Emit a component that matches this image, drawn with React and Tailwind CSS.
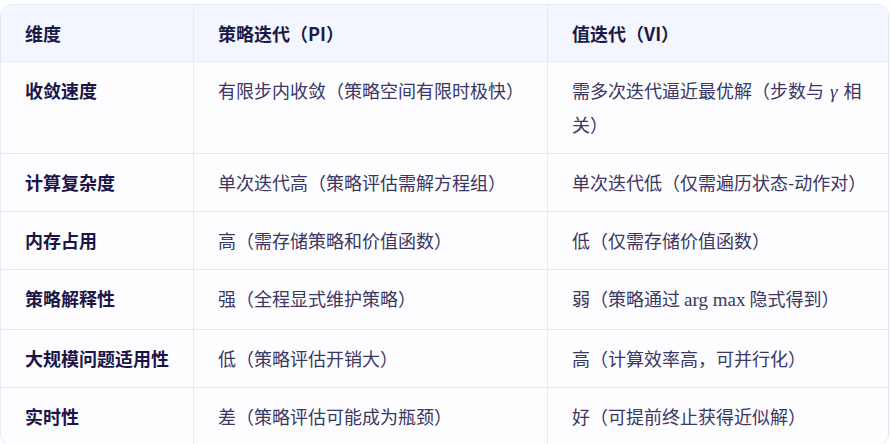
const rows = [
  ["收敛速度", "有限步内收敛（策略空间有限时极快）", "gamma"],
  ["计算复杂度", "单次迭代高（策略评估需解方程组）", "单次迭代低（仅需遍历状态-动作对）"],
  ["内存占用", "高（需存储策略和价值函数）", "低（仅需存储价值函数）"],
  ["策略解释性", "强（全程显式维护策略）", "argmax"],
  ["大规模问题适用性", "低（策略评估开销大）", "高（计算效率高，可并行化）"],
  ["实时性", "差（策略评估可能成为瓶颈）", "好（可提前终止获得近似解）"],
];

function Math({ children, italic }) {
  return (
    <span
      className={
        "font-['Liberation_Serif','DejaVu_Serif',serif] text-[19px] " +
        (italic ? "italic mx-0.5" : "")
      }
    >
      {children}
    </span>
  );
}

function ViCell({ value }) {
  if (value === "gamma") {
    return (
      <>
        需多次迭代逼近最优解（步数与 <Math italic>γ</Math> 相关）
      </>
    );
  }
  if (value === "argmax") {
    return (
      <>
        弱（策略通过 <Math>arg max</Math> 隐式得到）
      </>
    );
  }
  return value;
}

export default function App() {
  return (
    <div className="bg-white pt-1 w-[891px] h-[444px] font-['Noto_Sans_CJK_SC','Noto_Sans',sans-serif]">
      <div className="w-[889px] rounded-xl border border-[#e6e8f2] overflow-hidden">
        <table className="w-full border-separate border-spacing-0 table-fixed text-[18px] leading-[32px]">
          <colgroup>
            <col className="w-[193px]" />
            <col className="w-[354px]" />
            <col />
          </colgroup>
          <thead>
            <tr className="bg-[#f3f6fe] text-[#1b1a46] font-bold text-left">
              <th className="px-6 pt-[12px] pb-[12px] border-r border-b border-[#e6e8f2]">维度</th>
              <th className="px-6 pt-[12px] pb-[12px] border-r border-b border-[#e6e8f2]">策略迭代（PI）</th>
              <th className="px-6 pt-[12px] pb-[12px] border-b border-[#e6e8f2]">值迭代（VI）</th>
            </tr>
          </thead>
          <tbody className="bg-[#fdfdff]">
            {rows.map((r, i) => (
              <tr key={r[0]} className="align-top">
                <td
                  className={
                    "px-6 pt-[12px] pb-[13px] border-r border-[#e6e8f2] font-bold text-[#1c1548] " +
                    (i < rows.length - 1 ? "border-b" : "")
                  }
                >
                  {r[0]}
                </td>
                <td
                  className={
                    "px-6 pt-[12px] pb-[13px] border-r border-[#e6e8f2] text-[#3a3763] " +
                    (i < rows.length - 1 ? "border-b" : "")
                  }
                >
                  {r[1]}
                </td>
                <td
                  className={
                    "px-6 pt-[12px] pb-[13px] border-[#e6e8f2] text-[#3a3763] " +
                    (i < rows.length - 1 ? "border-b" : "")
                  }
                >
                  <ViCell value={r[2]} />
                </td>
              </tr>
            ))}
          </tbody>
        </table>
      </div>
    </div>
  );
}
